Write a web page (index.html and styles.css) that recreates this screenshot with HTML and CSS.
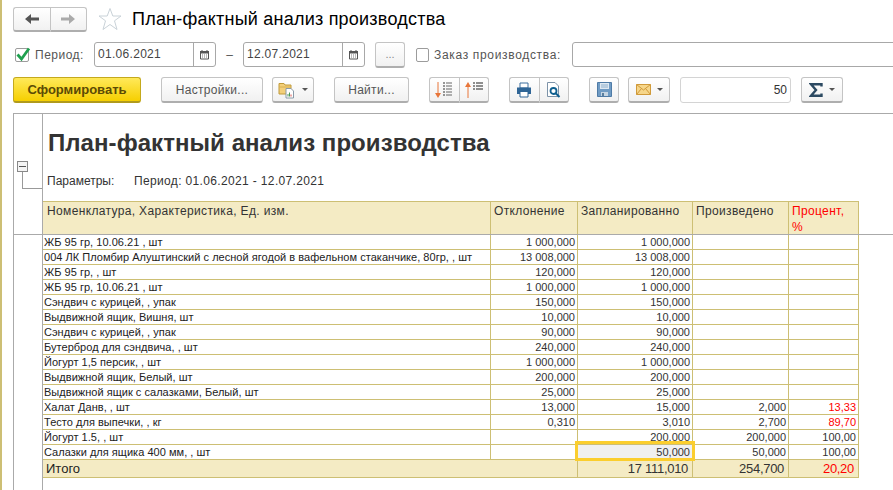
FILE: index.html
```html
<!DOCTYPE html>
<html lang="ru">
<head>
<meta charset="utf-8">
<title>План-фактный анализ производства</title>
<link rel="stylesheet" href="styles.css">
</head>
<body>
<div class="page">
  <div class="head-row">
    <div class="btn-group nav-group">
      <button class="btn seg"><svg width="16" height="12" viewBox="0 0 16 12"><path d="M1 6 7 1V4.500H15V7.500H7V11Z" fill="#555"/></svg></button>
      <button class="btn seg"><svg width="16" height="12" viewBox="0 0 16 12"><path d="M15 6 9 1V4.500H1V7.500H9V11Z" fill="#aaa"/></svg></button>
    </div>
    <svg class="star" width="24" height="24" viewBox="0 0 24 24"><path d="M12 1.500 14.800 9H23L16.500 13.800 19 22.500 12 17.500 5 22.500 7.500 13.800 1 9H9.200Z" fill="#fff" stroke="#c9d2d8"/></svg>
    <h1 class="page-title">План-фактный анализ производства</h1>
  </div>

  <div class="filter-row">
    <span class="check on"><svg width="16" height="16" viewBox="0 0 16 16"><path d="M2.500 7.500 6.500 12 14 1.500" fill="none" stroke="#1fa04f" stroke-width="2.800"/></svg></span>
    <label class="lbl lbl-period">Период:</label>
    <div class="field date"><span class="val">01.06.2021</span><span class="cal"><svg width="11" height="11" viewBox="0 0 11 11"><path d="M1.500 2.500H9.500V10H1.500Z" fill="#fff" stroke="#555"/><path d="M1 2h9v2.500H1z" fill="#555"/><path d="M3 1v2M8 1v2" stroke="#555"/><path d="M3 6h1M5 6h1M7 6h1M3 8h1M5 8h1M7 8h1" stroke="#777"/></svg></span></div>
    <span class="dash">–</span>
    <div class="field date"><span class="val">12.07.2021</span><span class="cal"><svg width="11" height="11" viewBox="0 0 11 11"><path d="M1.500 2.500H9.500V10H1.500Z" fill="#fff" stroke="#555"/><path d="M1 2h9v2.500H1z" fill="#555"/><path d="M3 1v2M8 1v2" stroke="#555"/><path d="M3 6h1M5 6h1M7 6h1M3 8h1M5 8h1M7 8h1" stroke="#777"/></svg></span></div>
    <button class="btn dots">...</button>
    <span class="check off"></span>
    <label class="lbl lbl-order">Заказ производства:</label>
    <div class="field order"></div>
  </div>

  <div class="tool-row">
    <button class="btn primary">Сформировать</button>
    <button class="btn txt w-settings">Настройки...</button>
    <button class="btn drop m-9">
      <svg width="18" height="18" viewBox="0 0 18 18"><path d="M1 2.500H6L7 4H13V13H1Z" fill="#f3cf7a" stroke="#c09a3a"/><path d="M1 6H13" stroke="#d8b050"/><path d="M8 7.500H13L15.500 10V17H8Z" fill="#fff" stroke="#8a9aa8"/><path d="M10 15.500V13M11.500 15.500V11.500" stroke="#4c9a5a"/><path d="M13 15.500V13.500" stroke="#d9534f"/></svg>
      <i class="caret"></i>
    </button>
    <button class="btn txt w-find">Найти...</button>
    <div class="btn-group m-20 sort-group">
      <button class="btn seg"><svg width="20" height="18" viewBox="0 0 20 18"><path d="M4 1V14" stroke="#e8763a"/><path d="M1 12 4 17 7 12Z" fill="#e8763a"/><path d="M9 2h2M9 5h2M9 8h2M9 11h2M9 14h2" stroke="#333"/><path d="M12 2h6M12 5h6M12 8h6M12 11h6M12 14h6" stroke="#666"/></svg></button>
      <button class="btn seg"><svg width="20" height="18" viewBox="0 0 20 18"><path d="M4 4V17" stroke="#e8763a"/><path d="M1 6 4 1 7 6Z" fill="#e8763a"/><path d="M9 2h2M9 5h2M9 8h2" stroke="#222"/><path d="M12 2h7M12 5h7M12 8h7" stroke="#222"/></svg></button>
    </div>
    <div class="btn-group m-20 print-group">
      <button class="btn seg"><svg width="16" height="16" viewBox="0 0 16 16"><path d="M4 1H12V6H4Z" fill="#fff" stroke="#3d6f9e"/><path d="M1 5.500H15V12H1Z" fill="#2f6596"/><path d="M4 9.500H12V15H4Z" fill="#fff" stroke="#2f6596"/></svg></button>
      <button class="btn seg"><svg width="16" height="16" viewBox="0 0 16 16"><path d="M1.500 .5H9L12.500 4V14.500H1.500Z" fill="#fff" stroke="#7d93a8"/><circle cx="7.500" cy="9" r="3" fill="#fff" stroke="#0f5f8f" stroke-width="1.800"/><path d="M10 11.500 13.500 15" stroke="#0f5f8f" stroke-width="2"/></svg></button>
    </div>
    <button class="btn icon m-20 w-save"><svg width="15" height="15" viewBox="0 0 15 15"><path d="M.5.5H14.500V14.500H.5Z" fill="#6f9bc4" stroke="#4f7ba6"/><path d="M3 1H12V7H3Z" fill="#dfe9f2"/><path d="M4 3H11M4 5H11" stroke="#8fb0cc"/><path d="M4 10H11V14H4Z" fill="#c5d5e3"/><path d="M5 11H7V14H5Z" fill="#5a7f9f"/></svg></button>
    <button class="btn drop m-9"><svg width="15" height="11" viewBox="0 0 15 11"><path d="M.5.5H14.500V10.500H.5Z" fill="#f6d68a" stroke="#d09a3a"/><path d="M.5.5 7.500 6 14.500.5M.5 10.500 5.500 4.500M14.500 10.500 9.500 4.500" fill="none" stroke="#d09a3a"/></svg><i class="caret"></i></button>
    <div class="field num m-10">50</div>
    <button class="btn drop m-10"><svg class="sigma" width="14" height="14" viewBox="0 0 14 14"><path d="M12.500 3.500V1.200H2L7 7 2 12.800H12.500V10.500" fill="none" stroke="#2c4a62" stroke-width="2.400"/></svg><i class="caret"></i></button>
  </div>

  <div class="report">
    <section class="report-top">
      <div class="gutter">
        <span class="tree-box"></span>
        <span class="tree-line"></span>
      </div>
      <div class="sheet">
        <h2 class="report-title">План-фактный анализ производства</h2>
        <div class="params"><span class="params-key">Параметры:</span><span class="params-val">Период: 01.06.2021 - 12.07.2021</span></div>
        <div class="row head">
          <div class="cell">Номенклатура, Характеристика, Ед. изм.</div>
          <div class="cell">Отклонение</div>
          <div class="cell">Запланированно</div>
          <div class="cell">Произведено</div>
          <div class="cell red">Процент,<br>%</div>
        </div>
      </div>
    </section>
    <section class="report-body">
      <div class="gutter"></div>
      <div class="sheet">
        <div class="row"><div class="cell name">ЖБ 95 гр, 10.06.21 , шт</div><div class="cell n">1 000,000</div><div class="cell n">1 000,000</div><div class="cell n"></div><div class="cell n"></div></div>
        <div class="row"><div class="cell name">004 ЛК Пломбир Алуштинский с лесной ягодой в вафельном стаканчике, 80гр, , шт</div><div class="cell n">13 008,000</div><div class="cell n">13 008,000</div><div class="cell n"></div><div class="cell n"></div></div>
        <div class="row"><div class="cell name">ЖБ 95 гр, , шт</div><div class="cell n">120,000</div><div class="cell n">120,000</div><div class="cell n"></div><div class="cell n"></div></div>
        <div class="row"><div class="cell name">ЖБ 95 гр, 10.06.21 , шт</div><div class="cell n">1 000,000</div><div class="cell n">1 000,000</div><div class="cell n"></div><div class="cell n"></div></div>
        <div class="row"><div class="cell name">Сэндвич с курицей, , упак</div><div class="cell n">150,000</div><div class="cell n">150,000</div><div class="cell n"></div><div class="cell n"></div></div>
        <div class="row"><div class="cell name">Выдвижной ящик, Вишня, шт</div><div class="cell n">10,000</div><div class="cell n">10,000</div><div class="cell n"></div><div class="cell n"></div></div>
        <div class="row"><div class="cell name">Сэндвич с курицей, , упак</div><div class="cell n">90,000</div><div class="cell n">90,000</div><div class="cell n"></div><div class="cell n"></div></div>
        <div class="row"><div class="cell name">Бутерброд для сэндвича, , шт</div><div class="cell n">240,000</div><div class="cell n">240,000</div><div class="cell n"></div><div class="cell n"></div></div>
        <div class="row"><div class="cell name">Йогурт 1,5 персик, , шт</div><div class="cell n">1 000,000</div><div class="cell n">1 000,000</div><div class="cell n"></div><div class="cell n"></div></div>
        <div class="row"><div class="cell name">Выдвижной ящик, Белый, шт</div><div class="cell n">200,000</div><div class="cell n">200,000</div><div class="cell n"></div><div class="cell n"></div></div>
        <div class="row"><div class="cell name">Выдвижной ящик с салазками, Белый, шт</div><div class="cell n">25,000</div><div class="cell n">25,000</div><div class="cell n"></div><div class="cell n"></div></div>
        <div class="row"><div class="cell name">Халат Данв, , шт</div><div class="cell n">13,000</div><div class="cell n">15,000</div><div class="cell n">2,000</div><div class="cell n red">13,33</div></div>
        <div class="row"><div class="cell name">Тесто для выпечки, , кг</div><div class="cell n">0,310</div><div class="cell n">3,010</div><div class="cell n">2,700</div><div class="cell n red">89,70</div></div>
        <div class="row"><div class="cell name">Йогурт 1.5, , шт</div><div class="cell n"></div><div class="cell n">200,000</div><div class="cell n">200,000</div><div class="cell n">100,00</div></div>
        <div class="row"><div class="cell name">Салазки для ящика 400 мм, , шт</div><div class="cell n"></div><div class="cell n selected">50,000</div><div class="cell n">50,000</div><div class="cell n">100,00</div></div>
        <div class="row total"><div class="cell wide">Итого</div><div class="cell n">17 111,010</div><div class="cell n">254,700</div><div class="cell n red">20,20</div></div>
      </div>
    </section>
  </div>
</div>
</body>
</html>
```
FILE: styles.css
```css
* { box-sizing: border-box; }
html, body { margin: 0; height: 100%; overflow: hidden; background: #fff; }
body { font-family: "Liberation Sans", Arial, sans-serif; font-size: 12px; color: #333; }
.page { height: 490px; border-left: 2px solid #cdbf74; padding-left: 11px; overflow: hidden; }

.head-row { display: flex; align-items: center; height: 38px; }
.btn { display: inline-flex; align-items: center; justify-content: center; padding: 0; font: inherit; color: #444;
  background: linear-gradient(#fff, #f1f1f1); border: 1px solid #c4c4c4; border-bottom: 2px solid #aeaeae; border-radius: 3px; }
.btn-group { display: flex; }
.btn-group .seg { border-radius: 0; border-right-width: 0; }
.btn-group .seg:first-child { border-radius: 3px 0 0 3px; }
.btn-group .seg:last-child { border-radius: 0 3px 3px 0; border-right-width: 1px; }
.nav-group { width: 74px; height: 25px; }
.nav-group .seg { flex: 1; }
.star { margin-left: 11px; }
.page-title { margin: 0 0 0 10px; font-size: 18px; font-weight: 400; color: #000; letter-spacing: .22px; white-space: nowrap; }

.filter-row { display: flex; align-items: center; height: 25px; margin-top: 4px; }
.filter-row > * { flex: none; }
.check { width: 14px; height: 14px; border: 1px solid #9c9c9c; border-radius: 2px; margin-left: 2px; background: #fff; display: block; }
.check svg { display: block; margin: -2px 0 0 -1px; }
.lbl { color: #555; }
.lbl-period { margin-left: 6px; width: 59px; letter-spacing: .5px; }
.field { border: 1px solid #a8a8a8; border-radius: 3px; background: #fff; height: 25px; }
.date { display: flex; width: 122px; font-size: 12px; letter-spacing: .3px; }
.date .val { flex: 1; padding-left: 3px; line-height: 23px; color: #444; }
.cal { width: 22px; border-left: 1px solid #a8a8a8; display: flex; align-items: center; justify-content: center; }
.dash { width: 27px; text-align: center; color: #555; }
.dots { width: 30px; height: 26px; margin-left: 10px; color: #888; font-size: 11px; }
.check.off { margin-left: 11px; width: 13px; height: 14px; }
.lbl-order { margin-left: 5px; width: 138px; letter-spacing: .67px; }
.order { width: 340px; }

.tool-row { display: flex; align-items: center; height: 26px; margin-top: 10px; }
.tool-row > * { height: 26px; flex: none; }
.primary { width: 128px; font-size: 13px; font-weight: 700; color: #5b4a05; background: linear-gradient(#ffe95a, #f6cf00); border: 1px solid #c4a91d; border-bottom: 2px solid #b09a1d; }
.txt { color: #555; letter-spacing: .3px; }
.w-settings { width: 102px; margin-left: 20px; }
.w-find { width: 75px; margin-left: 20px; }
.drop { width: 42px; gap: 6px; }
.m-9 { margin-left: 9px; }
.m-10 { margin-left: 10px; }
.m-20 { margin-left: 20px; }
.sort-group, .print-group { width: 60px; }
.sort-group .seg, .print-group .seg { flex: 1; }
.w-save { width: 30px; }
.caret { width: 0; height: 0; border: 3.5px solid transparent; border-top: 3.5px solid #555; border-bottom: 0; }
.num { width: 111px; border-color: #d4d4d4; text-align: right; padding-right: 3px; line-height: 24px; color: #333; }

.report { margin-top: 10px; border-top: 1px solid #aaa; border-left: 1px solid #aaa; }
.report-top { display: flex; border-bottom: 1px solid #aaa; height: 121px; }
.report-body { display: flex; height: 256px; }
.gutter { width: 29px; border-right: 1px solid #aaa; flex: none; position: relative; }
.tree-box { position: absolute; left: 3px; top: 47px; width: 11px; height: 11px; border: 1px solid #888; background: linear-gradient(#555, #555) center / 7px 1px no-repeat, #f4f4f4; }
.tree-line { position: absolute; left: 8px; top: 58px; width: 20px; height: 17px; border-left: 1px solid #999; border-bottom: 1px solid #999; }
.sheet { flex: 1; min-width: 0; }
.report-title { margin: 0; padding: 14px 0 0 5px; height: 55px; font-size: 24px; line-height: 30px; font-weight: 700; color: #333; white-space: nowrap; letter-spacing: .06px; }
.params { display: flex; height: 32px; padding: 5px 0 0 4px; line-height: 14px; }
.params-key { width: 87px; }
.params-val { letter-spacing: .35px; }

.row { display: grid; grid-template-columns: 448px 87px 115px 96px 70px; width: 816px; height: 15px; }
.cell { border-right: 1px solid #cdbf74; border-bottom: 1px solid #cdbf74; font-size: 11px; line-height: 14px; padding: 0 2px 0 1px; white-space: nowrap; overflow: hidden; color: #222; }
.cell.name { letter-spacing: .03px; }
.cell.n { text-align: right; padding-right: 2px; color: #333; }
.cell.red, .cell.n.red { color: #f00; }
.row.head { height: 33px; background: #f4ebc4; border-top: 1px solid #cdbf74; }
.row.head .cell { border-bottom: 0; font-size: 12px; line-height: 16px; padding: 1px 3px 1px 3px; color: #333; letter-spacing: .35px; }
.row.head .cell:first-child { padding-left: 4px; }
.row.head .cell.red { color: #f00; }
.row.total { height: 18px; background: #f4ebc4; grid-template-columns: 535px 115px 96px 70px; }
.row.total .cell { font-size: 13px; line-height: 17px; padding-left: 3px; }
.row.total .cell.n { letter-spacing: -.3px; padding-right: 4px; }
.selected { background: #f0f0f0; position: relative; overflow: visible; }
.selected::after { content: ""; position: absolute; inset: -4px -3px -2px -3px; border: 3px solid #fbce2e; pointer-events: none; }
```
